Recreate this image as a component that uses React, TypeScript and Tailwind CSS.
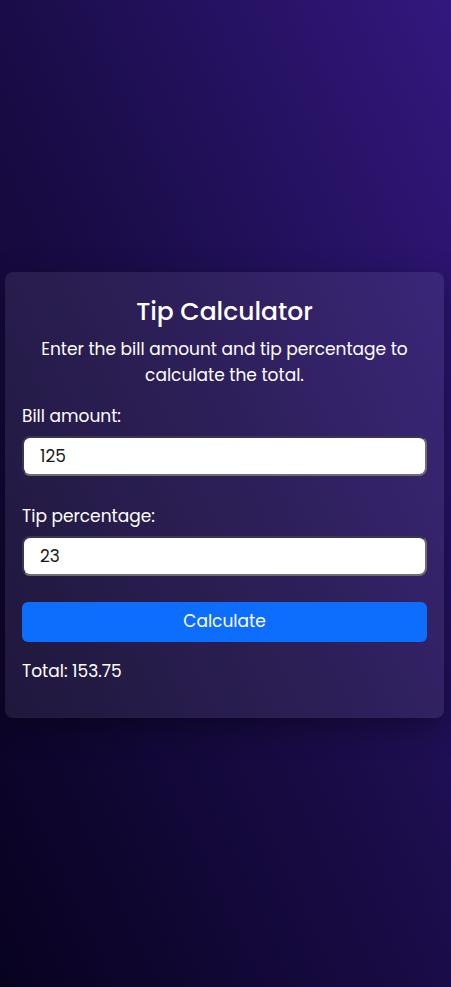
import { useState } from "react";

export default function App() {
  const [bill, setBill] = useState("125");
  const [tip, setTip] = useState("23");
  const [total, setTotal] = useState("153.75");

  const calculate = () => {
    const b = parseFloat(bill) || 0;
    const t = parseFloat(tip) || 0;
    setTotal((b + (b * t) / 100).toFixed(2));
  };

  const inputCls =
    "mt-[8px] block w-full h-[40px] rounded-lg bg-white text-[#1a1a1a] text-[17px] px-[16px] border-2 border-t-[#3a3550] border-l-[#3a3550] border-b-[#6e6e6e] border-r-[#6e6e6e] outline-none";

  return (
    <div
      className="min-h-[987px] flex items-center justify-start bg-[linear-gradient(to_top_right,#080220,#1a0c48_50%,#32187e)] text-white"
      style={{ fontFamily: "Poppins, Inter, 'Noto Sans', sans-serif" }}
    >
      <div className="w-[439px] ml-[5px] mt-[3px] rounded-lg bg-white/[0.08] shadow-[0_10px_30px_rgba(0,0,0,0.35)] px-[17px] pt-[24px] pb-[35px]">
        <h1 className="text-center text-[25px] font-medium leading-[32px]">Tip Calculator</h1>
        <p className="mt-[8px] text-center text-[17px] leading-[26px] px-[8px]">
          Enter the bill amount and tip percentage to calculate the total.
        </p>

        <label className="block mt-[16px] text-[17px] leading-[24px]">Bill amount:</label>
        <input value={bill} onChange={(e) => setBill(e.target.value)} className={inputCls} />

        <label className="block mt-[28px] text-[17px] leading-[24px]">Tip percentage:</label>
        <input value={tip} onChange={(e) => setTip(e.target.value)} className={inputCls} />

        <button
          onClick={calculate}
          className="mt-[26px] block w-full h-[40px] rounded-md bg-[#0d6efd] text-white text-[17px]"
        >
          Calculate
        </button>

        <p className="mt-[17px] text-[17px] leading-[24px]">Total: {total}</p>
      </div>
    </div>
  );
}
